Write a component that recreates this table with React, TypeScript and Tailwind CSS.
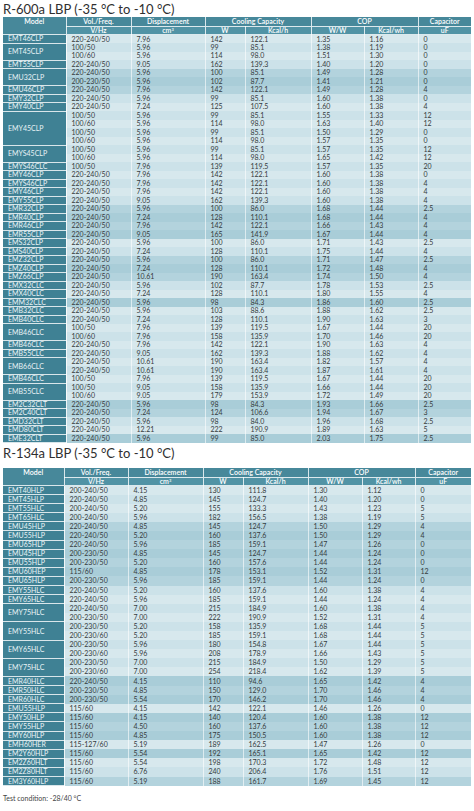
import React from "react";

interface Group {
  model: string;
  dark?: boolean;
  rows: string[];
}

const r600a: Group[] = [
  { model: "EMT46CLP", rows: ["220-240/50 7.96 142 122.1 1.35 1.16 0"] },
  { model: "EMT45CLP", rows: ["100/50 5.96 99 85.1 1.38 1.19 0", "100/60 5.96 114 98.0 1.51 1.30 0"] },
  { model: "EMT55CLP", rows: ["220-240/50 9.05 162 139.3 1.40 1.20 0"] },
  { model: "EMU32CLP", dark: true, rows: ["220-240/50 5.96 100 85.1 1.49 1.28 0", "200-230/50 5.96 102 87.7 1.41 1.21 0"] },
  { model: "EMU46CLP", dark: true, rows: ["220-240/50 7.96 142 122.1 1.49 1.28 4"] },
  { model: "EMY32CLP", rows: ["220-240/50 5.96 99 85.1 1.60 1.38 0"] },
  { model: "EMY40CLP", rows: ["220-240/50 7.24 125 107.5 1.60 1.38 4"] },
  {
    model: "EMY45CLP",
    rows: [
      "100/50 5.96 99 85.1 1.55 1.33 12",
      "100/60 5.96 114 98.0 1.63 1.40 12",
      "100/50 5.96 99 85.1 1.50 1.29 0",
      "100/60 5.96 114 98.0 1.57 1.35 0",
    ],
  },
  { model: "EMYS45CLP", rows: ["100/50 5.96 99 85.1 1.57 1.35 12", "100/60 5.96 114 98.0 1.65 1.42 12"] },
  { model: "EMYS46CLC", rows: ["100/50 7.96 139 119.5 1.57 1.35 20"] },
  { model: "EMY46CLP", rows: ["220-240/50 7.96 142 122.1 1.60 1.38 0"] },
  { model: "EMYS46CLP", rows: ["220-240/50 7.96 142 122.1 1.60 1.38 4"] },
  { model: "EMY46CLP", rows: ["220-240/50 7.96 142 122.1 1.60 1.38 4"] },
  { model: "EMY55CLP", rows: ["220-240/50 9.05 162 139.3 1.60 1.38 4"] },
  { model: "EMR32CLP", dark: true, rows: ["220-240/50 5.96 100 86.0 1.68 1.44 2.5"] },
  { model: "EMR40CLP", dark: true, rows: ["220-240/50 7.24 128 110.1 1.68 1.44 4"] },
  { model: "EMR46CLP", dark: true, rows: ["220-240/50 7.96 142 122.1 1.66 1.43 4"] },
  { model: "EMR55CLP", dark: true, rows: ["220-240/50 9.05 165 141.9 1.67 1.44 4"] },
  { model: "EMS32CLP", rows: ["220-240/50 5.96 100 86.0 1.71 1.43 2.5"] },
  { model: "EMS40CLP", rows: ["220-240/50 7.24 128 110.1 1.75 1.44 4"] },
  { model: "EMZ32CLP", dark: true, rows: ["220-240/50 5.96 100 86.0 1.71 1.47 2.5"] },
  { model: "EMZ40CLP", dark: true, rows: ["220-240/50 7.24 128 110.1 1.72 1.48 4"] },
  { model: "EMZ66CLP", dark: true, rows: ["220-240/50 10.61 190 163.4 1.74 1.50 4"] },
  { model: "EMX32CLC", rows: ["220-240/50 5.96 102 87.7 1.78 1.53 2.5"] },
  { model: "EMX40CLC", rows: ["220-240/50 7.24 128 110.1 1.80 1.55 4"] },
  { model: "EMM32CLC", dark: true, rows: ["220-240/50 5.96 98 84.3 1.86 1.60 2.5"] },
  { model: "EMB32CLC", rows: ["220-240/50 5.96 103 88.6 1.88 1.62 2.5"] },
  { model: "EMB40CLC", rows: ["220-240/50 7.24 128 110.1 1.90 1.63 3"] },
  { model: "EMB46CLC", rows: ["100/50 7.96 139 119.5 1.67 1.44 20", "100/60 7.96 158 135.9 1.70 1.46 20"] },
  { model: "EMB46CLC", rows: ["220-240/50 7.96 142 122.1 1.90 1.63 4"] },
  { model: "EMB55CLC", rows: ["220-240/50 9.05 162 139.3 1.88 1.62 4"] },
  { model: "EMB66CLC", rows: ["220-240/50 10.61 190 163.4 1.82 1.57 4", "220-240/50 10.61 190 163.4 1.87 1.61 4"] },
  { model: "EMB46CLC", rows: ["100/50 7.96 139 119.5 1.67 1.44 20"] },
  { model: "EMB55CLC", rows: ["100/50 9.05 158 135.9 1.66 1.44 20", "100/60 9.05 179 153.9 1.72 1.49 20"] },
  { model: "EM2C32CLT", dark: true, rows: ["220-240/50 5.96 98 84.3 1.93 1.66 2.5"] },
  { model: "EM2C40CLT", dark: true, rows: ["220-240/50 7.24 124 106.6 1.94 1.67 3"] },
  { model: "EMD32CLT", rows: ["220-240/50 5.96 98 84.0 1.96 1.68 2.5"] },
  { model: "EMD80CLT", rows: ["220-240/50 12.21 222 190.9 1.89 1.63 5"] },
  { model: "EME32CLT", dark: true, rows: ["220-240/50 5.96 99 85.0 2.03 1.75 2.5"] },
];

const r134a: Group[] = [
  { model: "EMT40HLP", rows: ["200-240/50 4.15 130 111.8 1.30 1.12 0"] },
  { model: "EMT45HLP", rows: ["220-240/50 4.85 145 124.7 1.40 1.20 0"] },
  { model: "EMT55HLC", rows: ["200-240/50 5.20 155 133.3 1.43 1.23 5"] },
  { model: "EMT65HLC", rows: ["200-240/50 5.96 182 156.5 1.38 1.19 5"] },
  { model: "EMU45HLP", dark: true, rows: ["220-240/50 4.85 145 124.7 1.50 1.29 4"] },
  { model: "EMU55HLP", dark: true, rows: ["220-240/50 5.20 160 137.6 1.50 1.29 4"] },
  { model: "EMU65HLP", dark: true, rows: ["220-240/50 5.96 185 159.1 1.47 1.26 0"] },
  { model: "EMU45HLP", dark: true, rows: ["200-230/50 4.85 145 124.7 1.44 1.24 0"] },
  { model: "EMU55HLP", dark: true, rows: ["200-230/50 5.20 160 157.6 1.44 1.24 0"] },
  { model: "EMU60HEP", dark: true, rows: ["115/60 4.85 178 153.1 1.52 1.31 12"] },
  { model: "EMU65HLP", dark: true, rows: ["200-230/50 5.96 185 159.1 1.44 1.24 0"] },
  { model: "EMY55HLC", rows: ["220-240/50 5.20 160 137.6 1.60 1.38 4"] },
  { model: "EMY65HLC", rows: ["220-240/50 5.96 185 159.1 1.44 1.24 4"] },
  { model: "EMY75HLC", rows: ["220-240/50 7.00 215 184.9 1.60 1.38 4", "200-230/50 7.00 222 190.9 1.52 1.31 4"] },
  { model: "EMY55HLC", rows: ["200-230/50 5.20 158 135.9 1.68 1.44 5", "200-230/60 5.20 185 159.1 1.68 1.44 5"] },
  { model: "EMY65HLC", rows: ["200-230/50 5.96 180 154.8 1.67 1.44 5", "200-230/60 5.96 208 178.9 1.66 1.43 5"] },
  { model: "EMY75HLC", rows: ["200-230/50 7.00 215 184.9 1.50 1.29 5", "200-230/60 7.00 254 218.4 1.62 1.39 5"] },
  { model: "EMR40HLC", dark: true, rows: ["220-240/50 4.15 110 94.6 1.65 1.42 4"] },
  { model: "EMR50HLC", dark: true, rows: ["200-230/50 4.85 150 129.0 1.70 1.46 4"] },
  { model: "EMR60HLC", dark: true, rows: ["200-230/50 5.54 170 146.2 1.70 1.46 4"] },
  { model: "EMU55HLP", rows: ["115/60 4.15 142 122.1 1.46 1.26 0"] },
  { model: "EMY50HLP", dark: true, rows: ["115/60 4.15 140 120.4 1.60 1.38 12"] },
  { model: "EMY55HLP", dark: true, rows: ["115/60 4.50 160 137.6 1.60 1.38 12"] },
  { model: "EMY60HLP", dark: true, rows: ["115/60 4.85 175 150.5 1.60 1.38 12"] },
  { model: "EMH60HER", rows: ["115-127/60 5.19 189 162.5 1.47 1.26 0"] },
  { model: "EM2Y60HLP", dark: true, rows: ["115/60 5.54 192 165.1 1.65 1.42 12"] },
  { model: "EM2Z60HLT", rows: ["115/60 5.54 198 170.3 1.72 1.48 12"] },
  { model: "EM2Z80HLT", rows: ["115/60 6.76 240 206.4 1.76 1.51 12"] },
  { model: "EM3Y60HLP", dark: true, rows: ["115/60 5.19 188 161.7 1.69 1.45 12"] },
];

function rowBg(dark: boolean | undefined, odd: boolean) {
  if (dark) return odd ? "bg-[#a9cdd8]" : "bg-[#b3d3dd]";
  return odd ? "bg-[#cce2e9]" : "bg-[#d7e8ed]";
}

function SpecTable({ groups, rowH, wide }: { groups: Group[]; rowH: string; wide?: boolean }) {
  let idx = 0;
  return (
    <table className="w-[468px] table-fixed border-collapse text-[7px] leading-none">
      {wide ? (
        <colgroup>
          <col className="w-[61px]" />
          <col className="w-[64px]" />
          <col className="w-[75px]" />
          <col className="w-[40px]" />
          <col className="w-[65px]" />
          <col className="w-[54px]" />
          <col className="w-[53px]" />
          <col className="w-[56px]" />
        </colgroup>
      ) : (
        <colgroup>
          <col className="w-[63px]" />
          <col className="w-[65px]" />
          <col className="w-[74px]" />
          <col className="w-[40px]" />
          <col className="w-[66px]" />
          <col className="w-[53px]" />
          <col className="w-[54px]" />
          <col className="w-[53px]" />
        </colgroup>
      )}
      <thead className="text-white">
        <tr className="h-[9px] bg-[#47889a]">
          <th rowSpan={2} className="border-r border-white/80 align-top pt-[1px] font-semibold">
            Model
          </th>
          <th className="border-x border-white/80 font-semibold">Vol./Freq.</th>
          <th className="border-x border-white/80 font-semibold">Displacement</th>
          <th colSpan={2} className="border-x border-white/80 font-semibold">
            Cooling Capacity
          </th>
          <th colSpan={2} className="border-x border-white/80 font-semibold">
            COP
          </th>
          <th className="border-l border-white/80 font-semibold">Capacitor</th>
        </tr>
        <tr className="h-[8.5px] bg-[#5193a5]">
          <th className="border border-white/80 font-semibold">V/Hz</th>
          <th className="border border-white/80 font-semibold">
            cm<sup className="text-[4px]">3</sup>
          </th>
          <th className="border border-white/80 font-semibold">W</th>
          <th className="border border-white/80 font-semibold">Kcal/h</th>
          <th className="border border-white/80 font-semibold">W/W</th>
          <th className="border border-white/80 font-semibold">Kcal/wh</th>
          <th className="border-y border-l border-white/80 font-semibold">uF</th>
        </tr>
      </thead>
      <tbody className="text-[#353b3d]">
        {groups.map((g, gi) =>
          g.rows.map((line, ri) => {
            const cells = line.split(" ");
            const odd = idx++ % 2 === 1;
            return (
              <tr key={`${gi}-${ri}`} className={`${rowH} ${rowBg(g.dark, odd)}`}>
                {ri === 0 && (
                  <td
                    rowSpan={g.rows.length}
                    className="bg-[#3f8194] text-[#e9f3f6] border-y border-r border-white/80 pl-[5px] align-middle"
                  >
                    {g.model}
                  </td>
                )}
                {cells.map((c, ci) => (
                  <td key={ci} className="border-x border-white/60 pl-[5px] p-0 align-middle">
                    {c}
                  </td>
                ))}
              </tr>
            );
          })
        )}
      </tbody>
    </table>
  );
}

export default function App() {
  return (
    <div className="w-[474px] h-[811px] overflow-hidden bg-white px-[3px] font-['Lato','Open_Sans',sans-serif]">
      <h2 className="pt-[4px] mb-[2px] text-[13px] leading-[11px] text-[#2f2f2f] font-normal">
        R-600a LBP (-35 °C to -10 °C)
      </h2>
      <SpecTable groups={r600a} rowH="h-[8.5px]" />
      <h2 className="mt-[5px] mb-[9px] text-[13px] leading-[11px] text-[#2f2f2f] font-normal">
        R-134a LBP (-35 °C to -10 °C)
      </h2>
      <SpecTable groups={r134a} rowH="h-[9.1px]" wide />
      <p className="mt-[9px] text-[7px] leading-none text-[#444]">Test condition: -28/40 °C</p>
    </div>
  );
}
